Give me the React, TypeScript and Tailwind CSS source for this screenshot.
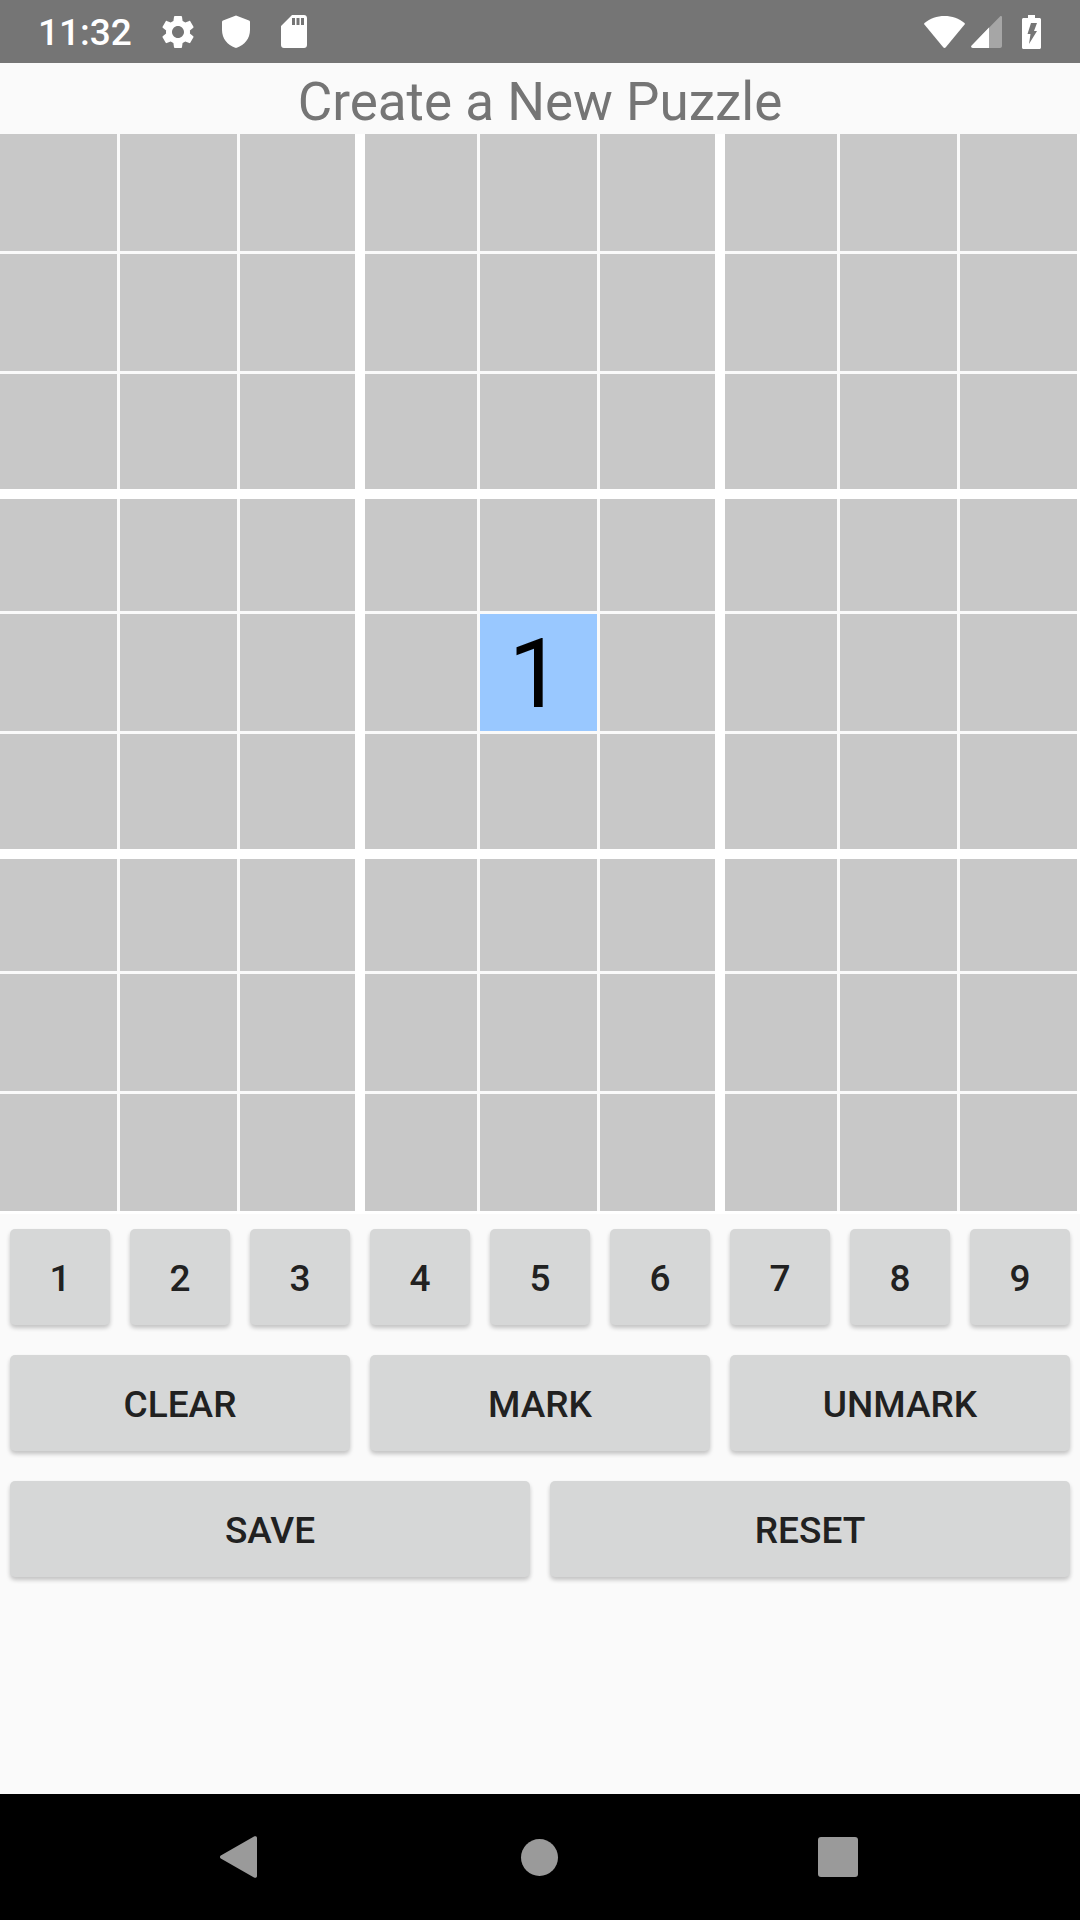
const colTemplates = [
  "grid-cols-[117px_117px_115px]",
  "grid-cols-[112px_117px_115px]",
  "grid-cols-[112px_117px_117px]",
];
const rowTemplates = [
  "grid-rows-[117px_117px_115px]",
  "grid-rows-[112px_117px_115px]",
  "grid-rows-[112px_117px_117px]",
];

const digits = ["1", "2", "3", "4", "5", "6", "7", "8", "9"];

function Cell({ value }: { value?: string }) {
  if (value) {
    return (
      <div className="flex items-center justify-center bg-[#99c8ff] pr-[6px] pt-[2px] text-[96px] leading-none text-black">
        {value}
      </div>
    );
  }
  return <div className="bg-[#c8c8c8]" />;
}

function Box({ row, col }: { row: number; col: number }) {
  return (
    <div className={`grid gap-[3px] bg-[#fafafa] ${colTemplates[col]} ${rowTemplates[row]}`}>
      {digits.map((d, i) => (
        <Cell key={d} value={row === 1 && col === 1 && i === 4 ? "1" : undefined} />
      ))}
    </div>
  );
}

function PadButton({ label }: { label: string }) {
  return (
    <button className="flex h-[96px] flex-1 items-center justify-center rounded-[5px] bg-[#d6d7d7] pt-[3px] text-[37px] font-medium text-[#212121] shadow-[0_3px_4px_rgba(0,0,0,0.22)]">
      {label}
    </button>
  );
}

export default function App() {
  return (
    <div className="flex h-[1920px] w-[1080px] flex-col bg-[#fafafa] font-['Roboto',sans-serif]">
      {/* status bar */}
      <div className="flex h-[63px] items-center justify-between bg-[#757575] pl-[38px] pr-[39px] text-white">
        <div className="flex items-center">
          <span className="w-[92px] pt-[1px] text-[37px] font-medium leading-none">11:32</span>
          <svg className="ml-[28px] h-[40px] w-[40px]" viewBox="0 0 24 24" fill="#fff">
            <path d="M19.14 12.94c.04-.3.06-.61.06-.94 0-.32-.02-.64-.07-.94l2.03-1.58c.18-.14.23-.41.12-.61l-1.92-3.32c-.12-.22-.37-.29-.59-.22l-2.39.96c-.5-.38-1.03-.7-1.62-.94l-.36-2.54c-.04-.24-.24-.41-.48-.41h-3.84c-.24 0-.43.17-.47.41l-.36 2.54c-.59.24-1.13.57-1.62.94l-2.39-.96c-.22-.08-.47 0-.59.22L2.74 8.87c-.12.21-.08.47.12.61l2.03 1.58c-.05.3-.09.63-.09.94s.02.64.07.94l-2.03 1.58c-.18.14-.23.41-.12.61l1.92 3.32c.12.22.37.29.59.22l2.39-.96c.5.38 1.03.7 1.62.94l.36 2.54c.05.24.24.41.48.41h3.84c.24 0 .44-.17.47-.41l.36-2.54c.59-.24 1.13-.56 1.62-.94l2.39.96c.22.08.47 0 .59-.22l1.92-3.32c.12-.22.07-.47-.12-.61l-2.01-1.58zM12 15.6c-1.98 0-3.6-1.62-3.6-3.6s1.62-3.6 3.6-3.6 3.6 1.62 3.6 3.6-1.62 3.6-3.6 3.6z" />
          </svg>
          <svg className="ml-[24px] h-[33px] w-[28px]" viewBox="0 0 28 33" fill="#fff">
            <path d="M14 0.5 L27 5.5 C27.6 5.8 28 6.2 28 7 V15 C28 23.5 22.5 30 14.8 32.8 C14.3 33 13.7 33 13.2 32.8 C5.5 30 0 23.5 0 15 V7 C0 6.2 0.4 5.8 1 5.5 Z" />
          </svg>
          <svg className="ml-[31px] h-[33px] w-[26px]" viewBox="0 0 26 33" fill="#fff" fillRule="evenodd">
            <path d="M11 0 H23 C24.7 0 26 1.3 26 3 V30 C26 31.7 24.7 33 23 33 H3 C1.3 33 0 31.7 0 30 V11 Z M11 3 V10 H14 V3 Z M15.5 3 V10 H18.5 V3 Z M20 3 V10 H23 V3 Z" />
          </svg>
        </div>
        <div className="flex items-center">
          <svg className="h-[32px] w-[41px]" viewBox="0 0 41 32" fill="#fff">
            <path d="M20.5 0 C28 0 35 2.5 40.5 7 C41 7.5 41 8 40.6 8.5 L21.8 31.3 C21 32.2 20 32.2 19.2 31.3 L0.4 8.5 C0 8 0 7.5 0.5 7 C6 2.5 13 0 20.5 0 Z" />
          </svg>
          <svg className="ml-[6px] h-[32px] w-[31px]" viewBox="0 0 31 32">
            <path d="M29 0.5 C30 -0.3 31 0.2 31 1.5 V30 C31 31 30 32 29 32 H2 C0.3 32 -0.5 30.6 0.7 29.4 Z" fill="#a6a6a6" />
            <path d="M18 11.5 V32 H2 C0.3 32 -0.5 30.6 0.7 29.4 Z" fill="#fff" />
          </svg>
          <svg className="ml-[20px] h-[34px] w-[19px]" viewBox="0 0 19 34" fill="#fff" fillRule="evenodd">
            <path d="M6 0 H13 V3 H17.5 C18.3 3 19 3.7 19 4.5 V32.5 C19 33.3 18.3 34 17.5 34 H1.5 C0.7 34 0 33.3 0 32.5 V4.5 C0 3.7 0.7 3 1.5 3 H6 Z M9 8 H15 L12 16 H15 L7 29 L8.5 19 H5.5 Z" />
          </svg>
        </div>
      </div>

      {/* title */}
      <div className="flex h-[71px] items-center justify-center pt-[7px] text-[53px] leading-none text-[#757575]">
        Create a New Puzzle
      </div>

      {/* board */}
      <div className="grid h-[1080px] grid-cols-[355px_350px_352px] grid-rows-[355px_350px_352px] gap-[10px] bg-white">
        {[0, 1, 2].map((row) =>
          [0, 1, 2].map((col) => <Box key={`${row}-${col}`} row={row} col={col} />)
        )}
      </div>

      {/* buttons */}
      <div className="flex flex-1 flex-col gap-[30px] px-[10px] pt-[15px]">
        <div className="flex gap-[20px]">
          {digits.map((d) => (
            <PadButton key={d} label={d} />
          ))}
        </div>
        <div className="flex gap-[20px]">
          <PadButton label="CLEAR" />
          <PadButton label="MARK" />
          <PadButton label="UNMARK" />
        </div>
        <div className="flex gap-[20px]">
          <PadButton label="SAVE" />
          <PadButton label="RESET" />
        </div>
      </div>

      {/* nav bar */}
      <div className="flex h-[126px] items-center bg-black pl-[220px]">
        <svg className="h-[42px] w-[37px]" viewBox="0 0 37 42" fill="#9a9a9a">
          <path d="M0.8 19.4 L34 0.6 C35.5 -0.3 37 0.3 37 2 V40 C37 41.7 35.5 42.3 34 41.4 L0.8 22.6 C-0.3 21.8 -0.3 20.2 0.8 19.4 Z" />
        </svg>
        <div className="ml-[264px] h-[37px] w-[37px] rounded-full bg-[#9a9a9a]" />
        <div className="ml-[260px] h-[40px] w-[40px] rounded-[3px] bg-[#9a9a9a]" />
      </div>
    </div>
  );
}
